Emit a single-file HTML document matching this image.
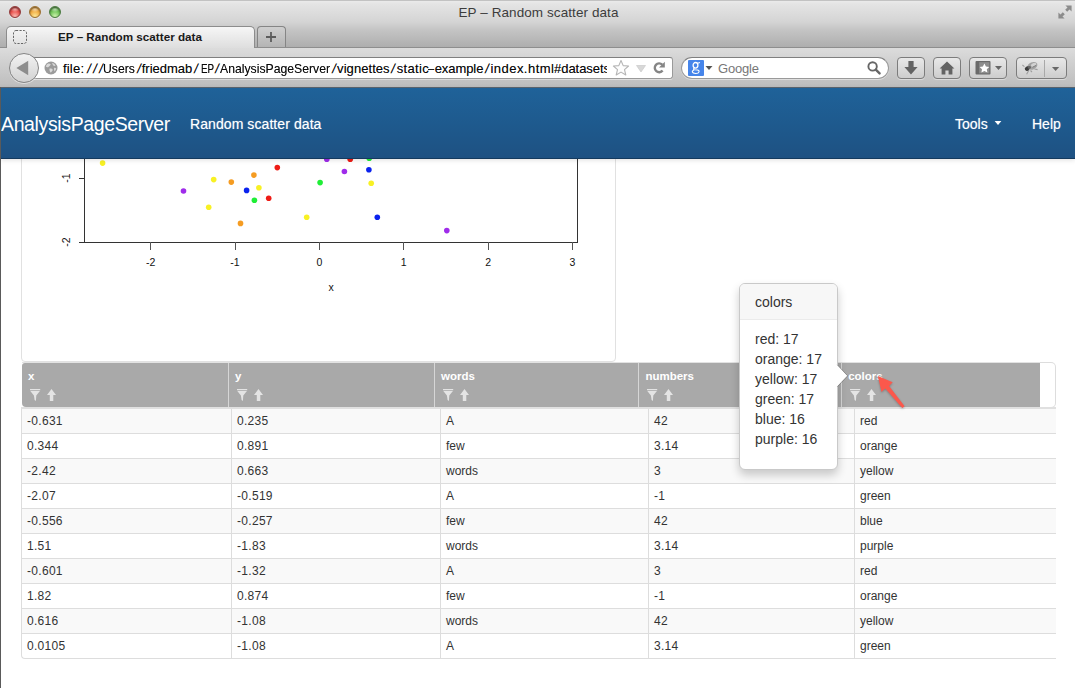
<!DOCTYPE html>
<html>
<head>
<meta charset="utf-8">
<title>EP - Random scatter data</title>
<style>
*{box-sizing:border-box;margin:0;padding:0}
html,body{width:1075px;height:688px;overflow:hidden;background:#fff;font-family:"Liberation Sans",sans-serif;}
#root{position:relative;width:1075px;height:688px;overflow:hidden;background:#fff}
.abs{position:absolute}
#chrome{left:0;top:0;width:1075px;height:88px;background:linear-gradient(#ececec 0px,#e4e4e4 4px,#d4d4d4 22px,#c4c4c4 30px,#aeaeae 47px,#dcdcdc 48px,#d2d2d2 60px,#bdbdbd 87px);}
#chromeline{left:0;top:87px;width:1075px;height:1px;background:#5d6670}
#title{left:458.5px;top:5px;white-space:nowrap;font-size:13.5px;color:#3c3c3c;line-height:16px;letter-spacing:.08px}
.tl{width:12px;height:12px;border-radius:50%;top:6px;box-shadow:inset 0 1px 1.5px rgba(0,0,0,.45),0 1px 0 rgba(255,255,255,.35)}
#tabline{left:0;top:47px;width:1075px;height:1px;background:#8e8e8e}
#tab{left:6px;top:26px;width:249px;height:22px;border:1px solid #8c8c8c;border-bottom:none;border-radius:5px 5px 0 0;background:linear-gradient(#f6f6f6,#dedede)}
#tabtxt{left:58px;top:29px;font-size:11.7px;font-weight:bold;color:#1a1a1a;line-height:15px;white-space:nowrap}
#newtab{left:257px;top:26px;width:29px;height:21px;border:1px solid #858585;border-bottom:none;border-radius:4px 4px 0 0;background:linear-gradient(#cfcfcf,#b4b4b4)}
.fld{background:#fff;border:1px solid #9a9a9a;border-top-color:#7f7f7f;height:22px;top:57px;box-shadow:0 1px 0 rgba(255,255,255,.45)}
.btn{top:57px;height:22px;border:1px solid #7c7c7c;border-radius:4px;background:linear-gradient(#e8e8e8,#cdcdcd);box-shadow:0 1px 0 rgba(255,255,255,.4)}
.u{position:absolute;top:61px;font-size:13px;line-height:16px;color:#0a0a0a;white-space:nowrap;text-shadow:0 0 .6px rgba(0,0,0,.45)}
#urlclip{left:0;top:0;width:607px;height:87px;overflow:hidden}
#gtxt{left:718px;top:61px;font-size:13px;line-height:16px;color:#777;white-space:nowrap;letter-spacing:-.2px}
#navbar{left:0;top:88px;width:1075px;height:71px;background:linear-gradient(#1f6299,#1e5a8e 50%,#1e5182);border-bottom:1px solid #143a5e;box-shadow:0 1px 5px rgba(0,0,0,.13)}
#brand{left:1px;top:112px;font-size:19.5px;color:#fff;line-height:24px;white-space:nowrap;letter-spacing:-0.37px}
.nv{font-size:14px;text-shadow:0 0 1px rgba(255,255,255,.5);color:#fff;line-height:18px;white-space:nowrap;top:115px}
#winleft{left:0;top:87px;width:1px;height:601px;background:#5a5a5a}
#plotpanel{left:21px;top:140px;width:595px;height:222px;border:1px solid #e1e1e1;border-radius:0 0 4px 4px;background:#fff}
.dot{position:absolute;width:5.6px;height:5.6px;border-radius:50%;margin:-2.8px 0 0 -2.8px}
.ax{position:absolute;background:#333}
.tk{position:absolute;font-size:10.5px;line-height:12px;color:#111;white-space:nowrap;text-align:center;width:20px;margin-left:-10px}
#thtop{left:22px;top:362px;width:1018px;height:1px;background:#e2e2e2}
#thead{left:22px;top:363px;width:1019px;height:44px;background:#a9a9a9;border-radius:3px 0 0 4px}
#thend{left:1040px;top:362px;width:16px;height:46px;border:1px solid #ddd;border-left:none;border-radius:0 5px 5px 0;background:#fff}
#tbtop{left:21px;top:407px;width:1035px;height:2px;background:#e0e0e0}
.hs{position:absolute;top:363px;width:1px;height:44px;background:#d6d6d6}
.hl{position:absolute;top:370px;font-size:11.5px;font-weight:bold;color:#fff;line-height:13px;white-space:nowrap}
.row{position:absolute;left:21px;width:1035px;height:25px;border-bottom:1px solid #ddd;border-left:1px solid #ddd}
.row.o{background:#f9f9f9}
.row.last{border-radius:0 0 0 4px}
.c{position:absolute;top:0;height:24px;border-left:1px solid #ddd;padding-left:5px;font-size:12px;line-height:24px;color:#333;white-space:nowrap}
#pop{left:739px;top:283px;width:99px;height:187px;border:1px solid #c9c9c9;border-radius:6px;background:#fff;box-shadow:0 5px 10px rgba(0,0,0,.2);overflow:hidden}
#poptitle{height:36px;background:#f7f7f7;border-bottom:1px solid #ebebeb;padding:8px 0 0 15px;font-size:14px;line-height:20px;color:#333}
#popbody{padding:9px 0 0 15px;font-size:14px;line-height:20px;color:#333;white-space:nowrap}
</style>
</head>
<body>
<div id="root">

  <div id="chrome" class="abs"></div>
  <div id="tabline" class="abs"></div>
  <div id="chromeline" class="abs"></div>
  <div id="title" class="abs">EP – Random scatter data</div>
  <div class="abs tl" style="left:9px;background:radial-gradient(ellipse 45% 28% at 50% 24%,rgba(255,255,255,.55),rgba(255,255,255,0)),radial-gradient(circle at 50% 92%,#fbbab2 0,#e9504c 52%,#a83634 100%);border:1px solid #92393a"></div>
  <div class="abs tl" style="left:29px;background:radial-gradient(ellipse 45% 28% at 50% 24%,rgba(255,255,255,.55),rgba(255,255,255,0)),radial-gradient(circle at 50% 92%,#fde896 0,#f1ac42 52%,#b07a2c 100%);border:1px solid #9c7030"></div>
  <div class="abs tl" style="left:49px;background:radial-gradient(ellipse 45% 28% at 50% 24%,rgba(255,255,255,.55),rgba(255,255,255,0)),radial-gradient(circle at 50% 92%,#cdf3ae 0,#70c458 52%,#458238 100%);border:1px solid #4a7a40"></div>
  <div id="tab" class="abs"></div>
  <div id="tabtxt" class="abs">EP – Random scatter data</div>
  <div id="newtab" class="abs"></div>
  <div class="abs fld" style="left:30px;width:643px;border-radius:3px"></div>
  <div class="abs" style="left:9px;top:53px;width:30px;height:30px;border-radius:50%;border:1px solid #858585;background:linear-gradient(#f2f2f2,#d2d2d2);box-shadow:0 1px 0 rgba(255,255,255,.5)"></div>
  <svg class="abs" style="left:9px;top:53px" width="29" height="29" viewBox="0 0 29 29"><path d="M7.4 15 L19.2 7.8 L19.2 22.2 Z" fill="#8d8d8d"/></svg>
  <svg class="abs" style="left:44px;top:61px" width="14" height="14" viewBox="0 0 14 14"><circle cx="7" cy="7" r="6.5" fill="#9b9b9b"/><path d="M3 3.2 C4.5 2.2 6 2.6 6.8 3.6 C6 4.6 5.4 5.6 4.2 6.2 C3.4 6.6 2.4 6 1.8 5.2 Z M8 2 C9.6 2.2 11 3.2 11.6 4.6 C10.6 5.2 9.6 5 9 4.2 Z M5.6 7.6 C6.8 7.2 8.2 7.8 8.8 8.8 C8.4 10.2 7.4 11.2 6.4 11.6 C5.8 10.4 5.2 9 5.6 7.6 Z M10 7 C10.8 6.6 11.8 7 12.2 7.6 C12 8.8 11.4 9.8 10.6 10.4 C10 9.4 9.8 8 10 7 Z" fill="#d9d9d9"/></svg>
  <div id="urlclip" class="abs"><span class="u" style="left:62.9px;letter-spacing:0.22px">file:</span><span class="u" style="left:103.4px;transform-origin:0 50%;transform:scaleX(0.937)">Users</span><span class="u" style="left:141.7px;letter-spacing:0.00px">friedmab</span><span class="u" style="left:200.8px;transform-origin:0 50%;transform:scaleX(0.755)">EP</span><span class="u" style="left:219.6px;transform-origin:0 50%;transform:scaleX(0.940)">AnalysisPageServer</span><span class="u" style="left:337.1px;letter-spacing:0.06px">vignettes</span><span class="u" style="left:396.7px;letter-spacing:0.32px">static</span><span class="u" style="left:428.4px;transform-origin:0 50%;transform:scaleX(0.858)">–</span><span class="u" style="left:434.7px;letter-spacing:-0.07px">example</span><span class="u" style="left:490.4px;letter-spacing:0.48px">index.html</span><span class="u" style="left:554.0px;letter-spacing:-0.04px">#datasets</span><span class="u" style="left:86.8px;transform:skewX(-11deg);transform-origin:50% 60%">/</span><span class="u" style="left:92.6px;transform:skewX(-11deg);transform-origin:50% 60%">/</span><span class="u" style="left:98.5px;transform:skewX(-11deg);transform-origin:50% 60%">/</span><span class="u" style="left:136.7px;transform:skewX(-11deg);transform-origin:50% 60%">/</span><span class="u" style="left:193.9px;transform:skewX(-11deg);transform-origin:50% 60%">/</span><span class="u" style="left:215.3px;transform:skewX(-11deg);transform-origin:50% 60%">/</span><span class="u" style="left:331.6px;transform:skewX(-11deg);transform-origin:50% 60%">/</span><span class="u" style="left:391.2px;transform:skewX(-11deg);transform-origin:50% 60%">/</span><span class="u" style="left:485.1px;transform:skewX(-11deg);transform-origin:50% 60%">/</span></div>

  <svg class="abs" style="left:612px;top:59px" width="60" height="18" viewBox="0 0 60 18"><path d="M9 1.5 L11.2 6.6 L16.6 7 L12.5 10.6 L13.8 16 L9 13.1 L4.2 16 L5.5 10.6 L1.4 7 L6.8 6.6 Z" fill="#fdfdfd" stroke="#b5b5b5" stroke-width="1.1" stroke-linejoin="round"/><path d="M24.5 6.5 L33.5 6.5 L29 13 Z" fill="#d8d8d8" stroke="#c4c4c4" stroke-width=".6"/><path d="M50.2 5.6 A4.4 4.4 0 1 0 50.6 11.6" fill="none" stroke="#858585" stroke-width="2.4"/><path d="M47 8.4 L52.8 8.4 L52.8 2.8 Z" fill="#858585"/></svg>
  <div class="abs fld" style="left:681px;width:208px;border-radius:11px"></div>
  <svg class="abs" style="left:688px;top:60px" width="16" height="16" viewBox="0 0 16 16"><rect width="16" height="16" rx="1" fill="#4685ea"/><ellipse cx="7.5" cy="5.3" rx="2.4" ry="2.8" fill="none" stroke="#fff" stroke-width="1.3"/><path d="M9.6 3.2 L12 2.5" stroke="#fff" stroke-width="1.1" fill="none"/><path d="M6.6 8 C5 8.6 5.2 9.6 6.6 9.8 L9.4 10 C12 10.4 11.6 13.4 7.8 13.5 C3.6 13.5 3.4 10.6 6.2 10" fill="none" stroke="#fff" stroke-width="1.1"/></svg>
  <svg class="abs" style="left:705px;top:65px" width="8" height="6" viewBox="0 0 8 6"><path d="M0.5 1 L7.5 1 L4 5 Z" fill="#555"/></svg>
  <div id="gtxt" class="abs">Google</div>
  <svg class="abs" style="left:866px;top:60px" width="16" height="16" viewBox="0 0 16 16"><circle cx="6.6" cy="6.4" r="4.2" fill="none" stroke="#666" stroke-width="1.9"/><path d="M9.8 9.6 L13.6 13.4" stroke="#666" stroke-width="2.4" stroke-linecap="round"/></svg>
  <div class="abs btn" style="left:897px;width:28px"></div>
  <svg class="abs" style="left:903px;top:60px" width="16" height="16" viewBox="0 0 16 16"><path d="M5.4 1 L10.6 1 L10.6 7 L14.6 7 L8 14.6 L1.4 7 L5.4 7 Z" fill="#636363"/></svg>
  <div class="abs btn" style="left:933px;width:28px"></div>
  <svg class="abs" style="left:939px;top:60px" width="16" height="16" viewBox="0 0 16 16"><path d="M8 1.4 L15.4 8.4 L13.4 8.4 L13.4 14.6 L9.6 14.6 L9.6 10.4 L6.4 10.4 L6.4 14.6 L2.6 14.6 L2.6 8.4 L0.6 8.4 Z" fill="#636363"/></svg>
  <div class="abs btn" style="left:969px;width:38px"></div>
  <svg class="abs" style="left:975px;top:60px" width="30" height="16" viewBox="0 0 30 16"><rect x="0.5" y="1" width="15" height="13.6" rx="1" fill="#6a6a6a"/><rect x="4.2" y="2.2" width="10.2" height="11.2" fill="#8d8d8d"/><path d="M9.4 3.4 L10.9 6.5 L14.2 6.9 L11.8 9.2 L12.4 12.5 L9.4 10.9 L6.4 12.5 L7 9.2 L4.6 6.9 L7.9 6.5 Z" fill="#fff"/><path d="M20 6 L27 6 L23.5 10 Z" fill="#666"/></svg>
  <div class="abs btn" style="left:1016px;width:51px"></div>
  <div class="abs" style="left:1044px;top:60px;width:1px;height:17px;background:#a9a9a9"></div>
  <svg class="abs" style="left:1020px;top:59px" width="46" height="18" viewBox="0 0 46 18"><path d="M9 11 L6.6 15.2 M14.4 10 L17.6 10.6 M4.4 7.6 L2.4 6 M10.5 11.5 L12 13" stroke="#8f8f8f" stroke-width="1.1" fill="none" opacity=".8"/><ellipse cx="12.4" cy="6.8" rx="5.2" ry="3.6" fill="#a2a2a2" transform="rotate(-22 12.4 6.8)"/><ellipse cx="13.6" cy="5.8" rx="2.8" ry="1.7" fill="#d2d2d2" transform="rotate(-22 13.6 5.8)"/><path d="M12.6 8.2 L16 6.4" stroke="#666" stroke-width="1" opacity=".7"/><ellipse cx="7.2" cy="9.6" rx="2.5" ry="2.1" fill="#3c3c3c" transform="rotate(-30 7.2 9.6)"/><ellipse cx="9.4" cy="8.4" rx="1.6" ry="1.3" fill="#666"/><path d="M32 8 L39.2 8 L35.6 12 Z" fill="#686868"/></svg>
  <svg class="abs" style="left:264px;top:30px" width="14" height="14" viewBox="0 0 14 14"><path d="M7 2 L7 12 M2 7 L12 7" stroke="#5c5c5c" stroke-width="1.8"/></svg>
  <svg class="abs" style="left:13px;top:30px" width="14" height="14" viewBox="0 0 14 14"><rect x="0.5" y="0.5" width="13" height="13" rx="2.5" fill="none" stroke="#666" stroke-width="1" stroke-dasharray="2.2 1.3"/></svg>
  <svg class="abs" style="left:1058px;top:5px" width="14" height="14" viewBox="0 0 14 14"><path d="M7.4 0.4 L13.6 0.4 L13.6 6.6 L11.5 4.5 L9.2 6.8 L7.2 4.8 L9.5 2.5 Z M6.6 13.6 L0.4 13.6 L0.4 7.4 L2.5 9.5 L4.8 7.2 L6.8 9.2 L4.5 11.5 Z" fill="#8c8c8c"/></svg>
  <div class="abs" style="left:0;top:0;width:1075px;height:1px;background:#c2c2c2"></div>

  <div id="plotpanel" class="abs"></div>
  <div class="ax" style="left:84px;top:140px;width:1px;height:103px"></div>
  <div class="ax" style="left:577px;top:140px;width:1px;height:103px"></div>
  <div class="ax" style="left:84px;top:242px;width:494px;height:1px"></div>
  <div class="ax" style="left:150px;top:242px;width:1px;height:8px;background:#555"></div>
  <div class="tk" style="left:150.6px;top:256px">-2</div>
  <div class="ax" style="left:235px;top:242px;width:1px;height:8px;background:#555"></div>
  <div class="tk" style="left:235.0px;top:256px">-1</div>
  <div class="ax" style="left:319px;top:242px;width:1px;height:8px;background:#555"></div>
  <div class="tk" style="left:319.3px;top:256px">0</div>
  <div class="ax" style="left:403px;top:242px;width:1px;height:8px;background:#555"></div>
  <div class="tk" style="left:403.7px;top:256px">1</div>
  <div class="ax" style="left:488px;top:242px;width:1px;height:8px;background:#555"></div>
  <div class="tk" style="left:488.2px;top:256px">2</div>
  <div class="ax" style="left:572px;top:242px;width:1px;height:8px;background:#555"></div>
  <div class="tk" style="left:572.4px;top:256px">3</div>
  <div class="ax" style="left:79px;top:178px;width:6px;height:1px"></div>
  <div class="tk" style="left:66px;top:172px;transform:rotate(-90deg)">-1</div>
  <div class="ax" style="left:79px;top:242px;width:6px;height:1px"></div>
  <div class="tk" style="left:66px;top:236px;transform:rotate(-90deg)">-2</div>
  <div class="tk" style="left:331px;top:281px">x</div>
  <svg class="abs" style="left:0;top:140px" width="620" height="110" viewBox="0 140 620 110"><circle cx="102.6" cy="163.1" r="2.8" fill="#f8f124"/><circle cx="277.3" cy="167.6" r="2.8" fill="#ee1c16"/><circle cx="253.9" cy="175.1" r="2.8" fill="#f59c22"/><circle cx="213.7" cy="179.6" r="2.8" fill="#f8f124"/><circle cx="231.3" cy="182.1" r="2.8" fill="#f59c22"/><circle cx="320.1" cy="182.6" r="2.8" fill="#1fee36"/><circle cx="258.9" cy="187.7" r="2.8" fill="#f8f124"/><circle cx="246.6" cy="190.4" r="2.8" fill="#0a22ee"/><circle cx="183.5" cy="191.0" r="2.8" fill="#9f2cea"/><circle cx="268.7" cy="198.3" r="2.8" fill="#ee1c16"/><circle cx="254.4" cy="200.2" r="2.8" fill="#1fee36"/><circle cx="208.7" cy="207.2" r="2.8" fill="#f8f124"/><circle cx="306.7" cy="217.2" r="2.8" fill="#f8f124"/><circle cx="240.5" cy="223.4" r="2.8" fill="#f59c22"/><circle cx="326.8" cy="159.2" r="2.8" fill="#9f2cea"/><circle cx="350.2" cy="159.2" r="2.8" fill="#ee1c16"/><circle cx="369.2" cy="158.3" r="2.8" fill="#1fee36"/><circle cx="368.9" cy="169.8" r="2.8" fill="#0a22ee"/><circle cx="344.4" cy="171.5" r="2.8" fill="#9f2cea"/><circle cx="371.2" cy="183.2" r="2.8" fill="#f8f124"/><circle cx="377.3" cy="217.2" r="2.8" fill="#0a22ee"/><circle cx="446.8" cy="230.6" r="2.8" fill="#9f2cea"/></svg>
  <div id="thtop" class="abs"></div>
  <div id="thead" class="abs"></div>
  <div id="thend" class="abs"></div>
  <div id="tbtop" class="abs"></div>
  <div class="hs" style="left:228px"></div>
  <div class="hs" style="left:434px"></div>
  <div class="hs" style="left:638px"></div>
  <div class="hs" style="left:841px"></div>
  <div class="hl" style="left:28px">x</div>
  <svg class="abs" style="left:30px;top:389px" width="28" height="13" viewBox="0 0 28 13"><path d="M0 0 L10.2 0 L10.2 1.2 L0 1.2 Z M0.3 2 L9.9 2 L6.3 6.4 L5.9 12 L4.6 11 L3.9 6.4 Z M21.5 0 L26 5.9 L23.3 5.9 L23.3 12 L19.8 12 L19.8 5.9 L17 5.9 Z" fill="#e4e4e4"/></svg>
  <div class="hl" style="left:235px">y</div>
  <svg class="abs" style="left:237px;top:389px" width="28" height="13" viewBox="0 0 28 13"><path d="M0 0 L10.2 0 L10.2 1.2 L0 1.2 Z M0.3 2 L9.9 2 L6.3 6.4 L5.9 12 L4.6 11 L3.9 6.4 Z M21.5 0 L26 5.9 L23.3 5.9 L23.3 12 L19.8 12 L19.8 5.9 L17 5.9 Z" fill="#e4e4e4"/></svg>
  <div class="hl" style="left:441px">words</div>
  <svg class="abs" style="left:443px;top:389px" width="28" height="13" viewBox="0 0 28 13"><path d="M0 0 L10.2 0 L10.2 1.2 L0 1.2 Z M0.3 2 L9.9 2 L6.3 6.4 L5.9 12 L4.6 11 L3.9 6.4 Z M21.5 0 L26 5.9 L23.3 5.9 L23.3 12 L19.8 12 L19.8 5.9 L17 5.9 Z" fill="#e4e4e4"/></svg>
  <div class="hl" style="left:645.4px">numbers</div>
  <svg class="abs" style="left:647px;top:389px" width="28" height="13" viewBox="0 0 28 13"><path d="M0 0 L10.2 0 L10.2 1.2 L0 1.2 Z M0.3 2 L9.9 2 L6.3 6.4 L5.9 12 L4.6 11 L3.9 6.4 Z M21.5 0 L26 5.9 L23.3 5.9 L23.3 12 L19.8 12 L19.8 5.9 L17 5.9 Z" fill="#e4e4e4"/></svg>
  <div class="hl" style="left:848.2px">colors</div>
  <svg class="abs" style="left:850px;top:389px" width="28" height="13" viewBox="0 0 28 13"><path d="M0 0 L10.2 0 L10.2 1.2 L0 1.2 Z M0.3 2 L9.9 2 L6.3 6.4 L5.9 12 L4.6 11 L3.9 6.4 Z M21.5 0 L26 5.9 L23.3 5.9 L23.3 12 L19.8 12 L19.8 5.9 L17 5.9 Z" fill="#e4e4e4"/></svg>
  <div class="row o" style="top:409px"><div class="c" style="left:0px;border-left:none;letter-spacing:.3px">-0.631</div><div class="c" style="left:209px;letter-spacing:.3px">0.235</div><div class="c" style="left:418px">A</div><div class="c" style="left:626px;letter-spacing:.3px">42</div><div class="c" style="left:832px">red</div></div>
  <div class="row" style="top:434px"><div class="c" style="left:0px;border-left:none;letter-spacing:.3px">0.344</div><div class="c" style="left:209px;letter-spacing:.3px">0.891</div><div class="c" style="left:418px">few</div><div class="c" style="left:626px;letter-spacing:.3px">3.14</div><div class="c" style="left:832px">orange</div></div>
  <div class="row o" style="top:459px"><div class="c" style="left:0px;border-left:none;letter-spacing:.3px">-2.42</div><div class="c" style="left:209px;letter-spacing:.3px">0.663</div><div class="c" style="left:418px">words</div><div class="c" style="left:626px;letter-spacing:.3px">3</div><div class="c" style="left:832px">yellow</div></div>
  <div class="row" style="top:484px"><div class="c" style="left:0px;border-left:none;letter-spacing:.3px">-2.07</div><div class="c" style="left:209px;letter-spacing:.3px">-0.519</div><div class="c" style="left:418px">A</div><div class="c" style="left:626px;letter-spacing:.3px">-1</div><div class="c" style="left:832px">green</div></div>
  <div class="row o" style="top:509px"><div class="c" style="left:0px;border-left:none;letter-spacing:.3px">-0.556</div><div class="c" style="left:209px;letter-spacing:.3px">-0.257</div><div class="c" style="left:418px">few</div><div class="c" style="left:626px;letter-spacing:.3px">42</div><div class="c" style="left:832px">blue</div></div>
  <div class="row" style="top:534px"><div class="c" style="left:0px;border-left:none;letter-spacing:.3px">1.51</div><div class="c" style="left:209px;letter-spacing:.3px">-1.83</div><div class="c" style="left:418px">words</div><div class="c" style="left:626px;letter-spacing:.3px">3.14</div><div class="c" style="left:832px">purple</div></div>
  <div class="row o" style="top:559px"><div class="c" style="left:0px;border-left:none;letter-spacing:.3px">-0.601</div><div class="c" style="left:209px;letter-spacing:.3px">-1.32</div><div class="c" style="left:418px">A</div><div class="c" style="left:626px;letter-spacing:.3px">3</div><div class="c" style="left:832px">red</div></div>
  <div class="row" style="top:584px"><div class="c" style="left:0px;border-left:none;letter-spacing:.3px">1.82</div><div class="c" style="left:209px;letter-spacing:.3px">0.874</div><div class="c" style="left:418px">few</div><div class="c" style="left:626px;letter-spacing:.3px">-1</div><div class="c" style="left:832px">orange</div></div>
  <div class="row o" style="top:609px"><div class="c" style="left:0px;border-left:none;letter-spacing:.3px">0.616</div><div class="c" style="left:209px;letter-spacing:.3px">-1.08</div><div class="c" style="left:418px">words</div><div class="c" style="left:626px;letter-spacing:.3px">42</div><div class="c" style="left:832px">yellow</div></div>
  <div class="row last" style="top:634px"><div class="c" style="left:0px;border-left:none;letter-spacing:.3px">0.0105</div><div class="c" style="left:209px;letter-spacing:.3px">-1.08</div><div class="c" style="left:418px">A</div><div class="c" style="left:626px;letter-spacing:.3px">3.14</div><div class="c" style="left:832px">green</div></div>
  <div id="navbar" class="abs"></div>
  <div id="brand" class="abs">AnalysisPageServer</div>
  <div class="abs nv" style="left:190px;letter-spacing:.08px">Random scatter data</div>
  <div class="abs nv" style="left:955px">Tools</div>
  <svg class="abs" style="left:994px;top:121px" width="8" height="4" viewBox="0 0 8 4"><path d="M0.6 0 L7.4 0 L4 4 Z" fill="#fff"/></svg>
  <div class="abs nv" style="left:1032px">Help</div>
  <div id="pop" class="abs"><div id="poptitle">colors</div><div id="popbody">red: 17<br>orange: 17<br>yellow: 17<br>green: 17<br>blue: 16<br>purple: 16</div></div>
  <svg class="abs" style="left:836px;top:364px" width="13" height="24" viewBox="0 0 13 24"><path d="M0 0.6 L1 0.6 L11.6 11.8 L1 23 L0 23 Z" fill="#fff"/><path d="M1.2 0.8 L11.6 11.8 L1.2 22.8" fill="none" stroke="#000" stroke-opacity=".32" stroke-width="1"/></svg>
  <svg class="abs" style="left:870px;top:368px" width="40" height="46" viewBox="0 0 40 46"><path d="M7.8 8 L22.7 14.3 L19.1 18 L34.6 38.2 L32.3 40.1 L15.3 20.5 L11.5 23.9 Z" fill="#fb584c" style="filter:drop-shadow(0 1px 1px rgba(0,0,0,.25))"/></svg>
  <div id="winleft" class="abs"></div>
</div>
</body>
</html>
